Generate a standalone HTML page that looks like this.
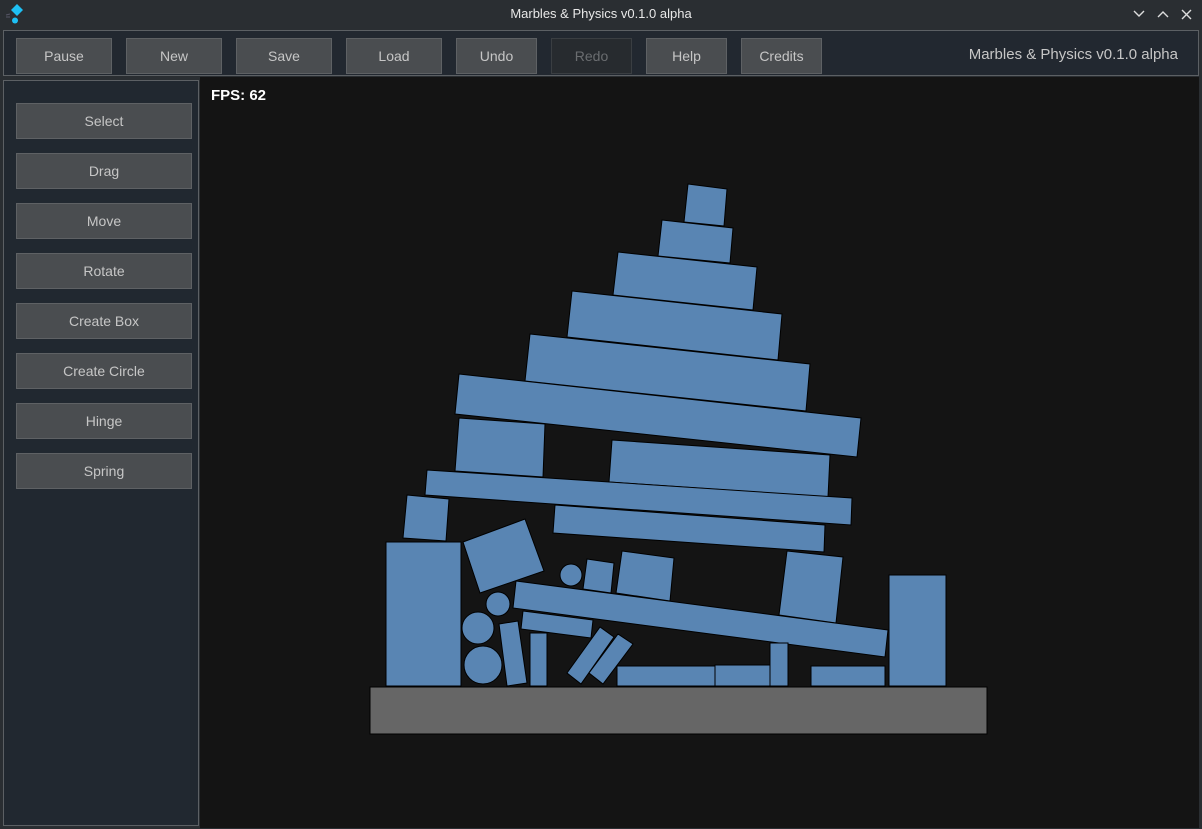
<!DOCTYPE html>
<html><head><meta charset="utf-8"><style>
*{margin:0;padding:0;box-sizing:border-box}
body{width:1202px;height:829px;background:#2a2e32;overflow:hidden;font-family:"Liberation Sans",sans-serif;position:relative}
.tb{position:absolute;left:0;top:0;width:1202px;height:28px;background:#2a2e32;color:#e8e8e8;font-size:13px;text-align:center;line-height:28px}
.frame{position:absolute;left:3px;top:30px;width:1196px;height:46px;background:#222830;border:1px solid #5c6064}
.btn{position:absolute;height:36px;background:#4a4d50;border:1px solid #5e6164;color:#c6c6c6;font-size:14px;text-align:center;line-height:34px}
.dis{background:#272b2f;border-color:#3a3e42;color:#6a6d70}
.side{position:absolute;left:3px;top:80px;width:196px;height:746px;background:#212830;border:1px solid #5c6064}
.canvas{position:absolute;left:200px;top:77px;width:999px;height:751px;background:#141414}
.fps{position:absolute;left:211px;top:87px;color:#fff;font-weight:bold;font-size:15px}
.ver{position:absolute;right:24px;top:46px;color:#c6c6c6;font-size:15px}
</style></head><body>
<div class="tb">Marbles &amp; Physics v0.1.0 alpha</div>
<svg style="position:absolute;left:0;top:0" width="1202" height="28">
<polygon points="17,4 23,10 17,16 11,10" fill="#1ec0f4"/>
<circle cx="15" cy="20.5" r="3" fill="#1ec0f4"/>
<path d="M6,15 L10,14 M6,17 L10,17" stroke="#556" stroke-width="1"/>
<path d="M1134,11 L1139,16 L1144,11" stroke="#ddd" stroke-width="1.4" fill="none"/>
<path d="M1158,17 L1163,12 L1168,17" stroke="#ddd" stroke-width="1.4" fill="none"/>
<path d="M1182,10 L1191,19 M1191,10 L1182,19" stroke="#ddd" stroke-width="1.4" fill="none"/>
</svg>
<div class="frame"></div>
<div class="btn" style="left:16px;top:38px;width:96px">Pause</div>
<div class="btn" style="left:126px;top:38px;width:96px">New</div>
<div class="btn" style="left:236px;top:38px;width:96px">Save</div>
<div class="btn" style="left:346px;top:38px;width:96px">Load</div>
<div class="btn" style="left:456px;top:38px;width:81px">Undo</div>
<div class="btn dis" style="left:551px;top:38px;width:81px">Redo</div>
<div class="btn" style="left:646px;top:38px;width:81px">Help</div>
<div class="btn" style="left:741px;top:38px;width:81px">Credits</div>
<div class="ver">Marbles &amp; Physics v0.1.0 alpha</div>
<div class="side"></div>
<div class="btn" style="left:16px;top:103px;width:176px">Select</div>
<div class="btn" style="left:16px;top:153px;width:176px">Drag</div>
<div class="btn" style="left:16px;top:203px;width:176px">Move</div>
<div class="btn" style="left:16px;top:253px;width:176px">Rotate</div>
<div class="btn" style="left:16px;top:303px;width:176px">Create Box</div>
<div class="btn" style="left:16px;top:353px;width:176px">Create Circle</div>
<div class="btn" style="left:16px;top:403px;width:176px">Hinge</div>
<div class="btn" style="left:16px;top:453px;width:176px">Spring</div>
<div class="canvas"></div>
<svg style="position:absolute;left:0;top:0" width="1202" height="829">
<g fill="#5985b3" stroke="#000" stroke-width="1">
<polygon points="688,184 727,189 724,226 684,222"/>
<polygon points="662,220 733,228 730,263 658,256"/>
<polygon points="618,252 757,267 753,310 613,295"/>
<polygon points="572,291 782,314 778,360 567,337"/>
<polygon points="530,334 810,364 806,411 525,381"/>
<polygon points="459,374 861,418 857,457 455,414"/>
<polygon points="459,418 545,424 543,477 455,471"/>
<polygon points="612,440 830,455 828,497 609,482"/>
<polygon points="427,470 852,498 851,525 425,495"/>
<polygon points="555,505 825,525 824,552 553,533"/>
<polygon points="407,495 449,499 446,541 403,538"/>
<rect x="386" y="542" width="75" height="144"/>
<polygon points="463,542 525,519 544,571 480,593"/>
<polygon points="787,551 843,557 836,623 779,615"/>
<polygon points="622,551 674,558 670,601 616,593"/>
<polygon points="587,559 614,563 611,593 583,589"/>
<circle cx="571" cy="575" r="11"/>
<circle cx="498" cy="604" r="12"/>
<circle cx="478" cy="628" r="16"/>
<circle cx="483" cy="665" r="19"/>
<polygon points="516,581 888,630 885,657 513,608"/>
<polygon points="523,611 593,620 591,638 521,629"/>
<polygon points="499,624 518,621 527,683 507,686"/>
<rect x="530" y="633" width="17" height="53"/>
<polygon points="567,673 600,627 614,637 581,684"/>
<polygon points="589,673 618,634 633,644 603,684"/>
<rect x="617" y="666" width="98" height="20"/>
<rect x="715" y="665" width="55" height="21"/>
<rect x="770" y="643" width="18" height="43"/>
<rect x="811" y="666" width="74" height="20"/>
<rect x="889" y="575" width="57" height="111"/>
</g>
<rect x="370" y="687" width="617" height="47" fill="#666" stroke="#000"/>
</svg>
<div class="fps">FPS: 62</div>
</body></html>
